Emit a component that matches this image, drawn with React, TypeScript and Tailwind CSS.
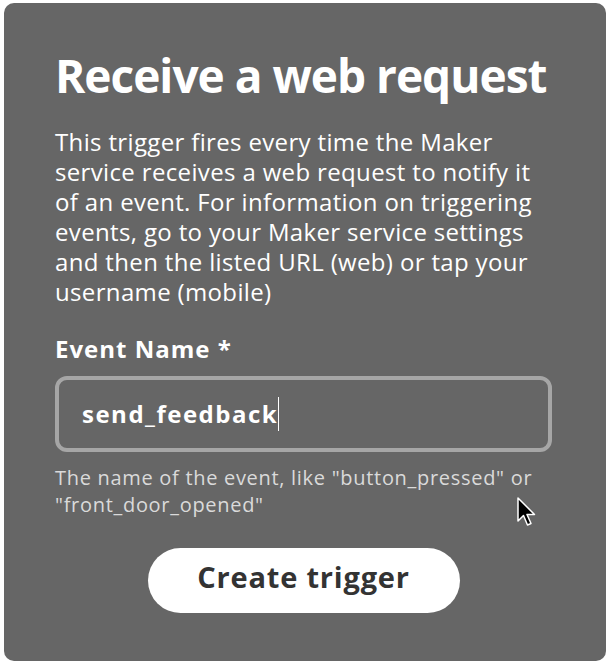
import { useState } from 'react'

export default function App() {
  const [eventName, setEventName] = useState('send_feedback')

  return (
    <div className="min-h-screen bg-white pl-[4px] pr-[8px] pt-[3px] pb-[2px]" style={{ fontFamily: '"Open Sans", "Noto Sans", sans-serif' }}>
      <div className="relative h-[658px] rounded-[10px] bg-[#666666] pl-[51px] pr-[54px] pt-[44px] text-white">
        {/* Header */}
        <h1 className="text-[46px] font-bold leading-[56px] tracking-[-1px]">Receive a web request</h1>
        <p className="mt-[24px] text-[24px] leading-[30px] tracking-[0.35px]">
          This trigger fires every time the Maker service receives a web request to notify it of an event. For
          information on triggering events, go to your Maker service settings and then the listed URL (web) or tap
          your username (mobile)
        </p>

        {/* Field */}
        <label className="mt-[27px] block text-[24px] font-bold leading-[30px] tracking-[1px]">Event Name *</label>
        <div className="mt-[12px] flex h-[76px] items-center rounded-[12px] border-[4px] border-[#a6a6a6] pl-[23px] pr-[16px]">
          <input
            value={eventName}
            onChange={(e) => setEventName(e.target.value)}
            className="field-sizing-content h-[30px] min-w-0 bg-transparent text-[24px] font-bold leading-[30px] tracking-[1.5px] text-white outline-none"
          />
          <span className="h-[34px] w-px bg-white" />
        </div>
        <p className="mt-[12px] text-[20px] leading-[27px] tracking-[0.7px] text-[#dadada]">
          The name of the event, like "button_pressed" or "front_door_opened"
        </p>

        {/* Action */}
        <div className="mt-[30px] flex justify-center">
          <button className="h-[65px] w-[312px] rounded-full bg-white pb-[7px] text-[29px] font-bold tracking-[0.8px] text-[#333333]">
            Create trigger
          </button>
        </div>

        {/* Mouse pointer */}
        <svg className="absolute left-[513px] top-[494px]" width="20" height="32" viewBox="0 0 20 32">
          <path d="M1 1 L1 24 L6.5 18.5 L10.5 28 L14 26.5 L10 17.5 L17.5 17.5 Z" fill="#000" stroke="#fff" strokeWidth="1.5" strokeLinejoin="round" />
        </svg>
      </div>
    </div>
  )
}
